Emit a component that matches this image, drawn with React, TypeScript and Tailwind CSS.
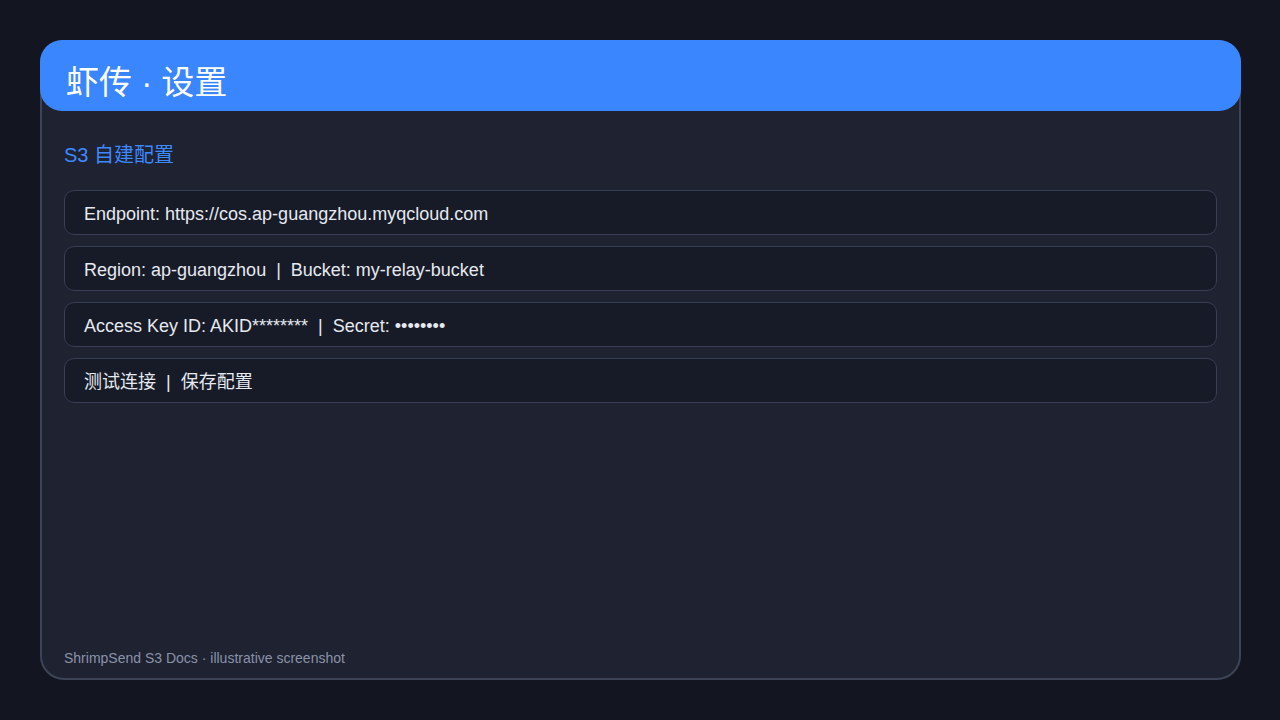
import React from "react";

const font = {
  fontFamily:
    '"Liberation Sans", Arial, "Noto Sans CJK SC", sans-serif',
};

const rows = [
  "Endpoint: https://cos.ap-guangzhou.myqcloud.com",
  "Region: ap-guangzhou  |  Bucket: my-relay-bucket",
  "Access Key ID: AKID********  |  Secret: ••••••••",
  "测试连接  |  保存配置",
];

export default function App() {
  return (
    <div className="min-h-screen w-full bg-[#131620] p-10" style={font}>
      <div className="flex h-[640px] w-[1201px] flex-col rounded-[24px] border-2 border-[#3d4458] bg-[#1e2231]">
        <div className="-mx-[2px] -mt-[2px] flex h-[71px] items-center rounded-[22px] bg-[#3a86ff] px-[26px] pt-[14px]">
          <h1 className="text-[33px] leading-none text-white">虾传 · 设置</h1>
        </div>
        <div className="flex flex-1 flex-col px-[22px] pt-[30px] pb-[10px]">
          <h2 className="text-[20px] leading-[28px] text-[#3d89ff]">S3 自建配置</h2>
          <div className="mt-[21px] flex flex-col gap-[11px]">
            {rows.map((r) => (
              <div
                key={r}
                className="flex h-[45px] items-center rounded-[10px] border border-[#383e55] bg-[#171b27] px-[19px] pt-[4px] text-[18px] text-[#e6e9f0] whitespace-pre"
              >
                {r}
              </div>
            ))}
          </div>
          <div className="mt-auto text-[14px] leading-[20px] text-[#8b92a8]">
            ShrimpSend S3 Docs · illustrative screenshot
          </div>
        </div>
      </div>
    </div>
  );
}
